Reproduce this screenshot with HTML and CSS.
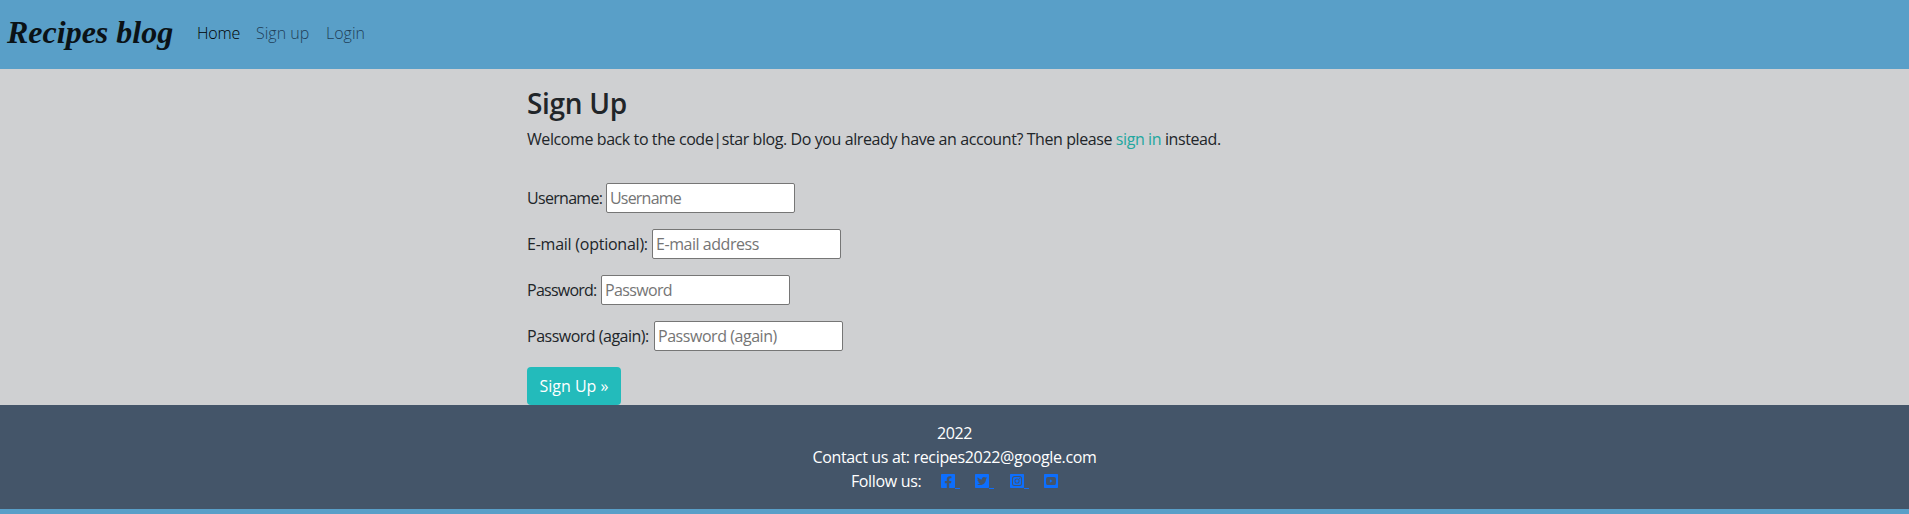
FILE: index.html
```html
<!DOCTYPE html>
<html lang="en">
<head>
<meta charset="utf-8">
<title>Recipes blog</title>
<link rel="stylesheet" href="styles.css">
</head>
<body>
<nav class="navbar">
  <a class="brand" href="#">Recipes blog</a>
  <a class="nav-link active nav-home" href="#">Home</a>
  <a class="nav-link nav-signup" href="#">Sign up</a>
  <a class="nav-link nav-login" href="#">Login</a>
</nav>
<main class="content">
  <h3 class="title">Sign Up</h3>
  <p class="intro">Welcome back to the code|star blog. Do you already have an account? Then please <a class="link" href="#">sign in</a> instead.</p>
  <form class="form">
    <p class="field field-user"><label for="u">Username:</label><input id="u" type="text" placeholder="Username"></p>
    <p class="field field-email"><label for="e">E-mail (optional):</label><input id="e" type="email" placeholder="E-mail address"></p>
    <p class="field field-pass"><label for="p">Password:</label><input id="p" type="password" placeholder="Password"></p>
    <p class="field field-again"><label for="a">Password (again):</label><input id="a" type="password" placeholder="Password (again)"></p>
    <button class="btn" type="button">Sign Up »</button>
  </form>
</main>
<footer class="footer">
  <p class="year">2022</p>
  <p class="contact">Contact us at: recipes2022@google.com</p>
  <div class="follow"><span class="follow-text">Follow us:</span>
    <a class="social" href="#"><svg viewBox="0 0 448 448"><path fill-rule="evenodd" d="M424 0H24A24 24 0 0 0 0 24v400a24 24 0 0 0 24 24h161V296h-63v-72h63v-55c0-62 37-96 93-96 27 0 56 5 56 5v61h-31c-31 0-41 19-41 39v46h69l-11 72h-58v152h162a24 24 0 0 0 24-24V24a24 24 0 0 0-24-24z"/></svg></a>
    <a class="social" href="#"><svg viewBox="0 0 448 448"><path fill-rule="evenodd" d="M424 0H24A24 24 0 0 0 0 24v400a24 24 0 0 0 24 24h400a24 24 0 0 0 24-24V24a24 24 0 0 0-24-24zM351 159v8c0 87-66 187-187 187-37 0-72-11-100-30 35 4 70-6 97-27-29 0-53-20-61-46 10 2 20 1 29-1-30-6-52-33-52-65v-1c9 5 19 8 30 8-31-21-38-58-21-88 33 40 81 66 136 69-10-45 25-81 64-81 19 0 36 8 48 21 15-3 29-8 42-16-5 15-15 28-29 36 13-1 26-5 38-10-9 14-20 26-34 36z"/></svg></a>
    <a class="social" href="#"><svg viewBox="0 0 448 448"><path fill-rule="evenodd" d="M24 0A24 24 0 0 0 0 24v400a24 24 0 0 0 24 24h400a24 24 0 0 0 24-24V24a24 24 0 0 0-24-24zM144 64h160a80 80 0 0 1 80 80v160a80 80 0 0 1-80 80H144a80 80 0 0 1-80-80V144a80 80 0 0 1 80-80zm4 30a54 54 0 0 0-54 54v152a54 54 0 0 0 54 54h152a54 54 0 0 0 54-54V148a54 54 0 0 0-54-54zM224 142a82 82 0 1 1 0 164 82 82 0 0 1 0-164zm0 29a53 53 0 1 0 0 106 53 53 0 0 0 0-106zM309 120a19 19 0 1 1 0 38 19 19 0 0 1 0-38z"/></svg></a>
    <a class="social last" href="#"><svg viewBox="0 0 448 448"><path fill-rule="evenodd" d="M24 0A24 24 0 0 0 0 24v400a24 24 0 0 0 24 24h400a24 24 0 0 0 24-24V24a24 24 0 0 0-24-24zM224 97s-100 0-125 7c-14 4-25 15-28 28-7 25-7 94-7 94s0 69 7 94c3 14 14 24 28 28 25 6 125 6 125 6s100 0 125-6c14-4 25-14 28-28 7-25 7-94 7-94s0-69-7-94c-3-13-14-24-28-28-25-7-125-7-125-7zM187 169l84 55-84 55z"/></svg></a>
  </div>
</footer>
</body>
</html>
```
FILE: styles.css
```css
* { box-sizing: border-box; }
body {
  margin: 0;
  background: #599fc8;
  color: #212529;
  font: 400 16px/24px "Open Sans", "Noto Sans", sans-serif;
}
a { text-decoration: none; }
p { margin: 0; }
.navbar {
  display: flex;
  height: 69px;
  padding: 4px 7px 0;
  white-space: nowrap;
}
.brand {
  width: 190px;
  color: #0b1216;
  font: italic 700 32px/56px "Liberation Serif", serif;
}
.nav-link {
  font-weight: 300;
  line-height: 59px;
  color: #1f4058;
}
.nav-link.active { color: #000; }
.nav-home { width: 59px; letter-spacing: -0.2px; }
.nav-signup { width: 70px; }
.content {
  height: 336px;
  padding: 17px 0 0 527px;
  background: #cfd0d2;
}
.title {
  margin: 0 0 7px;
  font-size: 28px;
  font-weight: 600;
  line-height: 34px;
  letter-spacing: -0.3px;
}
.intro { letter-spacing: -0.41px; white-space: nowrap; }
.link { color: #23a79f; }
.form { padding-top: 32px; }
.field {
  display: flex;
  align-items: center;
  height: 30px;
  margin-bottom: 16px;
}
label { white-space: nowrap; }
.field-user label { width: 79px; letter-spacing: -0.7px; }
.field-email label { width: 125px; letter-spacing: -0.24px; }
.field-pass label { width: 74px; letter-spacing: -0.75px; }
.field-again label { width: 127px; letter-spacing: -0.5px; }
input {
  width: 189px;
  height: 30px;
  padding: 1px 2px 1px 3px;
  border: 1px solid #767676;
  border-radius: 2px;
  background: #fff;
  font: inherit;
  letter-spacing: -0.45px;
}
.field-user input { letter-spacing: -0.8px; }
.field-pass input { letter-spacing: -0.65px; }
input::placeholder { color: #757575; opacity: 1; }
.btn {
  display: block;
  width: 94px;
  height: 38px;
  padding: 0;
  border: 0;
  border-radius: 4px;
  background: #23bbbb;
  color: #fff;
  font: inherit;
  white-space: nowrap;
}
.footer {
  height: 104px;
  padding: 16px 0;
  background: #445569;
  color: #fff;
  text-align: center;
  letter-spacing: -0.34px;
}
.follow {
  display: flex;
  justify-content: center;
}
.follow-text { width: 90px; text-align: left; }
.social {
  position: relative;
  width: 34.4px;
  height: 24px;
  text-align: left;
}
.social.last { width: 14px; }
.social svg {
  display: block;
  width: 14px;
  height: 14px;
  margin-top: 5px;
  fill: #0d6efd;
}
.social:not(.last)::after {
  content: "";
  position: absolute;
  left: 14px;
  top: 19px;
  width: 5px;
  height: 1px;
  background: #0d6efd;
}
```
